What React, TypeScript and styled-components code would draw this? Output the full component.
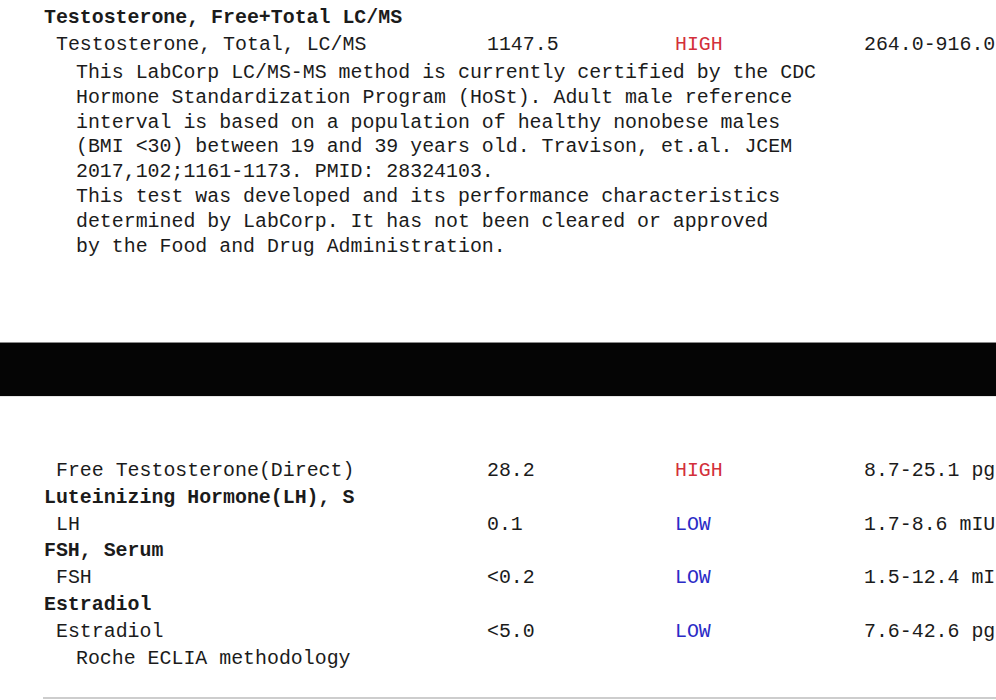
import React from "react";
import styled, { createGlobalStyle } from "styled-components";

const GlobalStyle = createGlobalStyle`
    html, body {
        margin: 0;
        padding: 0;
        background: #ffffff;
        overflow: hidden;
    }
    body {
        font-family: "Liberation Mono", "Courier New", monospace;
        font-size: 19.9px;
        color: #1b1b1b;
    }
`;

const Report = styled.div`
    width: 996px;
    height: 700px;
    overflow: hidden;
`;

const Section = styled.section<{ $height?: number; $top: number }>`
    padding-top: ${p => p.$top}px;
    height: ${p => (p.$height ? `${p.$height}px` : "auto")};
    box-sizing: border-box;
`;

const Redaction = styled.div`
    height: 53px;
    background: #050505;
    border-top: 1px solid #8a8a8a;
    border-bottom: 1px solid #e6e6e6;
`;

const GroupTitle = styled.div`
    padding-left: 44px;
    line-height: 26.8px;
    font-weight: 700;
    white-space: nowrap;
`;

const ResultRow = styled.div`
    display: grid;
    grid-template-columns: 431px 188px 189px 1fr;
    padding-left: 56px;
    line-height: 26.8px;
    white-space: nowrap;
`;

const Cell = styled.span``;

const Flag = styled.span<{ $level: "HIGH" | "LOW" }>`
    color: ${p => (p.$level === "HIGH" ? "#d3303b" : "#2b2bc6")};
`;

const Note = styled.div<{ $lineHeight: number; $gap: number }>`
    padding-left: 76px;
    margin-top: ${p => p.$gap}px;
    line-height: ${p => p.$lineHeight}px;
    white-space: pre;
`;

const Rule = styled.hr`
    margin: 25px 0 0 43px;
    border: 0;
    border-top: 2px solid #cdcdcd;
`;

type Result = {
    name: string;
    value: string;
    flag: "HIGH" | "LOW";
    range: string;
};

const Row: React.FC<Result> = ({ name, value, flag, range }) => (
    <ResultRow>
        <Cell>{name}</Cell>
        <Cell>{value}</Cell>
        <Flag $level={flag}>{flag}</Flag>
        <Cell>{range}</Cell>
    </ResultRow>
);

const testosteroneNote = [
    "This LabCorp LC/MS-MS method is currently certified by the CDC",
    "Hormone Standardization Program (HoSt). Adult male reference",
    "interval is based on a population of healthy nonobese males",
    "(BMI <30) between 19 and 39 years old. Travison, et.al. JCEM",
    "2017,102;1161-1173. PMID: 28324103.",
    "This test was developed and its performance characteristics",
    "determined by LabCorp. It has not been cleared or approved",
    "by the Food and Drug Administration.",
];

export default function App() {
    return (
        <Report>
            <GlobalStyle />
            <Section $top={5} $height={342}>
                <GroupTitle>Testosterone, Free+Total LC/MS</GroupTitle>
                <Row name="Testosterone, Total, LC/MS" value="1147.5" flag="HIGH" range="264.0-916.0" />
                <Note $lineHeight={24.8} $gap={2.5}>
                    {testosteroneNote.map(line => (
                        <div key={line}>{line}</div>
                    ))}
                </Note>
            </Section>
            <Redaction />
            <Section $top={61}>
                <Row name="Free Testosterone(Direct)" value="28.2" flag="HIGH" range="8.7-25.1 pg" />
                <GroupTitle>Luteinizing Hormone(LH), S</GroupTitle>
                <Row name="LH" value="0.1" flag="LOW" range="1.7-8.6 mIU" />
                <GroupTitle>FSH, Serum</GroupTitle>
                <Row name="FSH" value="<0.2" flag="LOW" range="1.5-12.4 mI" />
                <GroupTitle>Estradiol</GroupTitle>
                <Row name="Estradiol" value="<5.0" flag="LOW" range="7.6-42.6 pg" />
                <Note $lineHeight={26.8} $gap={0}>
                    Roche ECLIA methodology
                </Note>
                <Rule />
            </Section>
        </Report>
    );
}
